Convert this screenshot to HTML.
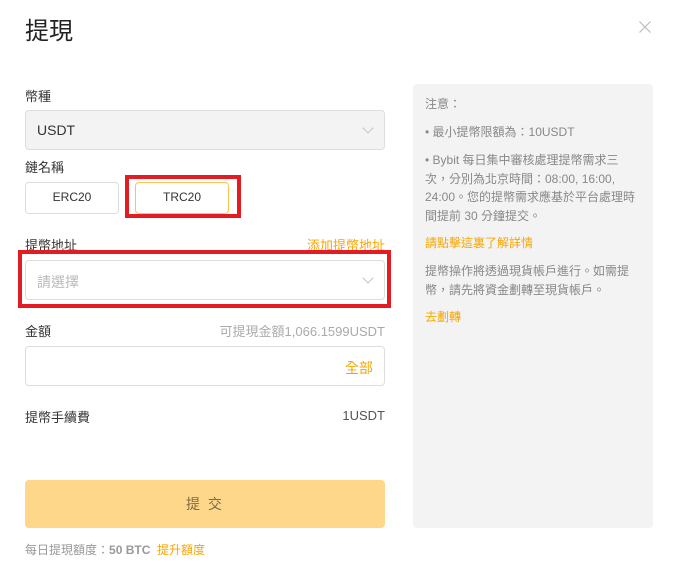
<!DOCTYPE html>
<html><head><meta charset="utf-8"><style>
*{margin:0;padding:0;box-sizing:border-box}
body{width:678px;height:564px;background:#fff;font-family:"Liberation Sans","Noto Sans CJK TC",sans-serif;position:relative;overflow:hidden;color:#333}
.a{position:absolute;white-space:nowrap}
.lbl{font-size:13px;color:#333}
.box{position:absolute;border:1px solid #ddd;border-radius:4px}
.chev{position:absolute;width:8px;height:8px;border-right:1px solid #c4c4c4;border-bottom:1px solid #c4c4c4;transform:rotate(45deg)}
.or{color:#f7a600}
.r{position:absolute;border:4px solid #e31b23}
.p{font-size:12px;color:#888;line-height:18.5px}
</style></head><body>
<div class="a" style="left:25px;top:11px;font-size:24px;color:#222">提現</div>
<svg class="a" style="left:639px;top:21px" width="12" height="12" viewBox="0 0 12 12"><path d="M0.5 0.5L11.5 11.5M11.5 0.5L0.5 11.5" stroke="#bbb" stroke-width="1.2"/></svg>

<div class="a lbl" style="left:25px;top:86px">幣種</div>
<div class="box" style="left:25px;top:110px;width:360px;height:40px;background:#f3f3f3"></div>
<div class="a" style="left:37px;top:122px;font-size:14px;color:#333">USDT</div>
<div class="chev" style="left:364px;top:124px"></div>

<div class="a lbl" style="left:25px;top:157px">鏈名稱</div>
<div class="box" style="left:25px;top:182px;width:94px;height:32px"></div>
<div class="a" style="left:25px;top:190px;width:94px;text-align:center;font-size:12px;color:#333">ERC20</div>
<div class="r" style="left:125px;top:175px;width:116px;height:43px"></div>
<div class="box" style="left:135px;top:182px;width:94px;height:32px;border-color:#f9c450"></div>
<div class="a" style="left:135px;top:190px;width:94px;text-align:center;font-size:12px;color:#333">TRC20</div>

<div class="a lbl" style="left:25px;top:235px">提幣地址</div>
<div class="a or" style="right:293px;top:235px;font-size:13px">添加提幣地址</div>
<div class="r" style="left:18px;top:250px;width:373px;height:58px"></div>
<div class="box" style="left:25px;top:260px;width:360px;height:40px"></div>
<div class="a" style="left:37px;top:272px;font-size:14px;color:#bbb">請選擇</div>
<div class="chev" style="left:364px;top:274px"></div>

<div class="a lbl" style="left:25px;top:321px">金額</div>
<div class="a" style="right:293px;top:321px;font-size:13px;color:#aaa">可提現金額1,066.1599USDT</div>
<div class="box" style="left:25px;top:346px;width:360px;height:40px"></div>
<div class="a or" style="left:345px;top:358px;font-size:14px">全部</div>

<div class="a lbl" style="left:25px;top:407px">提幣手續費</div>
<div class="a" style="right:293px;top:408px;font-size:13px;color:#555">1USDT</div>

<div class="a" style="left:25px;top:480px;width:360px;height:48px;background:#fed78a;border-radius:4px;text-align:center;line-height:48px;font-size:14px;color:#7d6a48;letter-spacing:2px">提 交</div>
<div class="a" style="left:25px;top:541px;font-size:12px;color:#999">每日提現額度：<b style="color:#999">50 BTC</b>&nbsp; <span class="or">提升額度</span></div>

<div class="a" style="left:413px;top:84px;width:240px;height:444px;background:#f3f3f3;border-radius:4px"></div>
<div class="a p" style="left:425px;top:95px">注意：</div>
<div class="a p" style="left:425px;top:123px">• 最小提幣限額為：10USDT</div>
<div class="a p" style="left:425px;top:151px;white-space:normal;width:212px">• Bybit 每日集中審核處理提幣需求三次，分別為北京時間：08:00, 16:00, 24:00。您的提幣需求應基於平台處理時間提前 30 分鐘提交。</div>
<div class="a p or" style="left:425px;top:234px;color:#f7a600">請點擊這裏了解詳情</div>
<div class="a p" style="left:425px;top:262px;white-space:normal;width:215px">提幣操作將透過現貨帳戶進行。如需提幣，請先將資金劃轉至現貨帳戶。</div>
<div class="a p" style="left:425px;top:308px;color:#f7a600">去劃轉</div>
</body></html>
